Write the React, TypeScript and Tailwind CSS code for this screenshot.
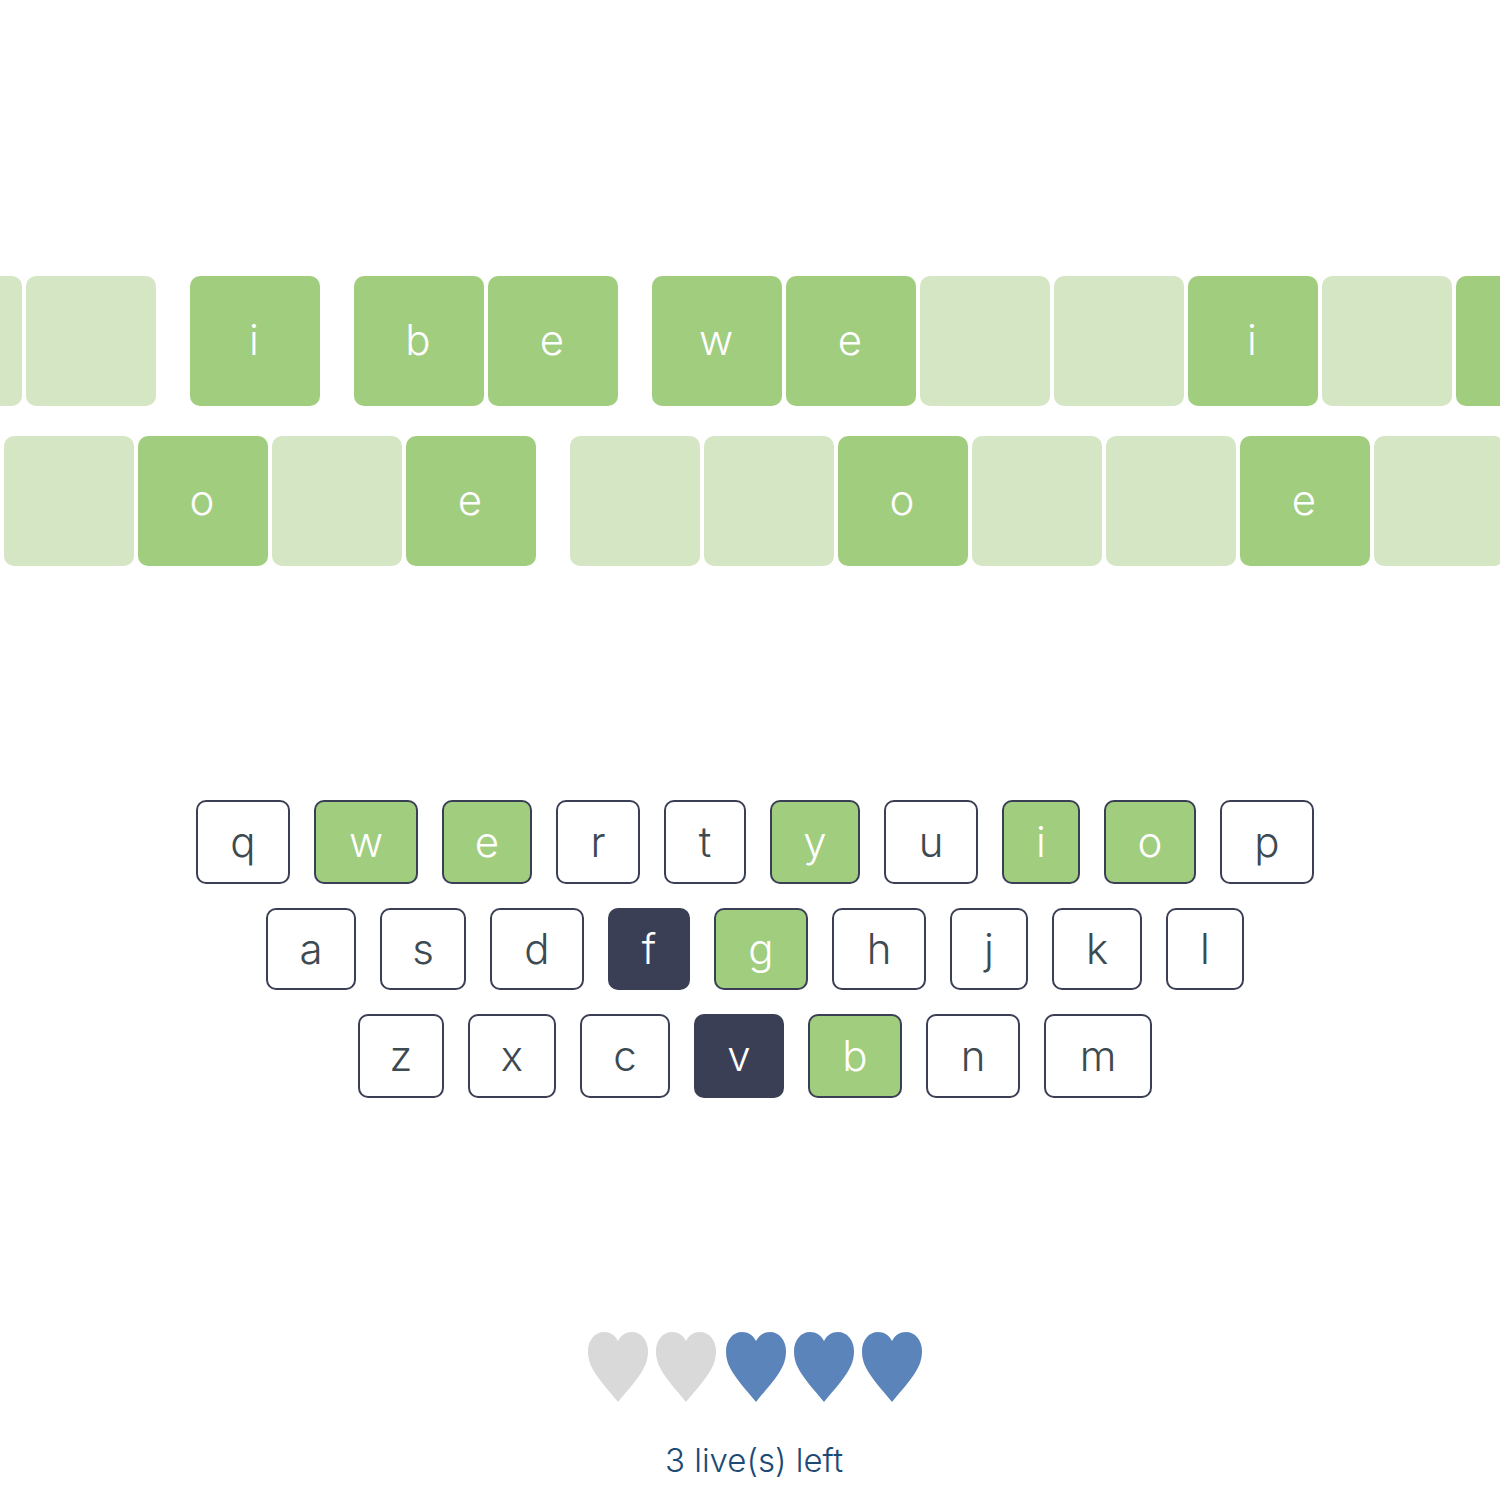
const TOP_ROW = [
  { ch: '', on: false },
  { ch: '', on: false, end: true },
  { ch: 'i', on: true, end: true },
  { ch: 'b', on: true },
  { ch: 'e', on: true, end: true },
  { ch: 'w', on: true },
  { ch: 'e', on: true },
  { ch: '', on: false },
  { ch: '', on: false },
  { ch: 'i', on: true },
  { ch: '', on: false },
  { ch: '', on: true },
];

const BOTTOM_ROW = [
  { ch: '', on: false },
  { ch: 'o', on: true },
  { ch: '', on: false },
  { ch: 'e', on: true, end: true },
  { ch: '', on: false },
  { ch: '', on: false },
  { ch: 'o', on: true },
  { ch: '', on: false },
  { ch: '', on: false },
  { ch: 'e', on: true },
  { ch: '', on: false },
];

type KeyState = 'idle' | 'hit' | 'miss';

const KEYS: { ch: string; w: string; state: KeyState }[][] = [
  [
    { ch: 'q', w: 'w-[94px]', state: 'idle' },
    { ch: 'w', w: 'w-[104px]', state: 'hit' },
    { ch: 'e', w: 'w-[90px]', state: 'hit' },
    { ch: 'r', w: 'w-[84px]', state: 'idle' },
    { ch: 't', w: 'w-[82px]', state: 'idle' },
    { ch: 'y', w: 'w-[90px]', state: 'hit' },
    { ch: 'u', w: 'w-[94px]', state: 'idle' },
    { ch: 'i', w: 'w-[78px]', state: 'hit' },
    { ch: 'o', w: 'w-[92px]', state: 'hit' },
    { ch: 'p', w: 'w-[94px]', state: 'idle' },
  ],
  [
    { ch: 'a', w: 'w-[90px]', state: 'idle' },
    { ch: 's', w: 'w-[86px]', state: 'idle' },
    { ch: 'd', w: 'w-[94px]', state: 'idle' },
    { ch: 'f', w: 'w-[82px]', state: 'miss' },
    { ch: 'g', w: 'w-[94px]', state: 'hit' },
    { ch: 'h', w: 'w-[94px]', state: 'idle' },
    { ch: 'j', w: 'w-[78px]', state: 'idle' },
    { ch: 'k', w: 'w-[90px]', state: 'idle' },
    { ch: 'l', w: 'w-[78px]', state: 'idle' },
  ],
  [
    { ch: 'z', w: 'w-[86px]', state: 'idle' },
    { ch: 'x', w: 'w-[88px]', state: 'idle' },
    { ch: 'c', w: 'w-[90px]', state: 'idle' },
    { ch: 'v', w: 'w-[90px]', state: 'miss' },
    { ch: 'b', w: 'w-[94px]', state: 'hit' },
    { ch: 'n', w: 'w-[94px]', state: 'idle' },
    { ch: 'm', w: 'w-[108px]', state: 'idle' },
  ],
];

const ROW_HEIGHTS = ['h-[84px]', 'h-[82px]', 'h-[84px]'];

const KEY_STYLE: Record<KeyState, string> = {
  idle: 'bg-white text-[#3d4a52]',
  hit: 'bg-[#a1cd7f] text-white',
  miss: 'bg-[#3b3f55] text-white',
};

function Tile({ ch, on, end }: { ch: string; on: boolean; end?: boolean }) {
  return (
    <div
      className={`flex h-[130px] w-[130px] shrink-0 items-center justify-center rounded-[10px] pb-1 pr-0.5 text-[42px] font-light text-white ${on ? 'bg-[#a1cd7f]' : 'bg-[#d4e6c4]'} ${end ? 'mr-[34px]' : 'mr-1'}`}
    >
      {ch}
    </div>
  );
}

function Heart({ full, className }: { full: boolean; className?: string }) {
  return (
    <svg width="60" height="70" viewBox="0 0 60 70" className={`${full ? 'fill-[#5b85ba]' : 'fill-[#d9d9d9]'} ${className ?? ''}`}>
      <path d="M30 70C24 62 14 52 7 41C2 33 0 27 0 19C0 8 7 0 16 0C22 0 27 3 30 9C33 3 38 0 44 0C53 0 60 8 60 19C60 27 58 33 53 41C46 52 36 62 30 70Z" />
    </svg>
  );
}

export default function App() {
  return (
    <div className="h-[1500px] w-[1500px] overflow-hidden bg-white pt-[276px] font-['Inter',sans-serif]">
      <div className="ml-[-108px] flex">
        {TOP_ROW.map((t, i) => (
          <Tile key={i} {...t} />
        ))}
      </div>
      <div className="ml-1 mt-[30px] flex">
        {BOTTOM_ROW.map((t, i) => (
          <Tile key={i} {...t} />
        ))}
      </div>

      <div className="mt-[234px] flex flex-col gap-6 pl-[10px]">
        {KEYS.map((row, r) => (
          <div key={r} className="flex justify-center gap-6">
            {row.map((k) => (
              <div
                key={k.ch}
                className={`flex items-center justify-center rounded-[10px] border-2 border-[#3b3f55] pb-0.5 text-[42px] font-light ${k.w} ${ROW_HEIGHTS[r]} ${KEY_STYLE[k.state]}`}
              >
                {k.ch}
              </div>
            ))}
          </div>
        ))}
      </div>

      <div className="mt-[234px] flex justify-center gap-2 pl-[10px]">
        {[false, false, true, true, true].map((full, i) => (
          <Heart key={i} full={full} className={i === 2 ? 'ml-0.5' : ''} />
        ))}
      </div>
      <p className="mt-[38px] pl-[8px] text-center text-[33px] font-light leading-[40px] text-[#1c4a75]">3 live(s) left</p>
    </div>
  );
}
